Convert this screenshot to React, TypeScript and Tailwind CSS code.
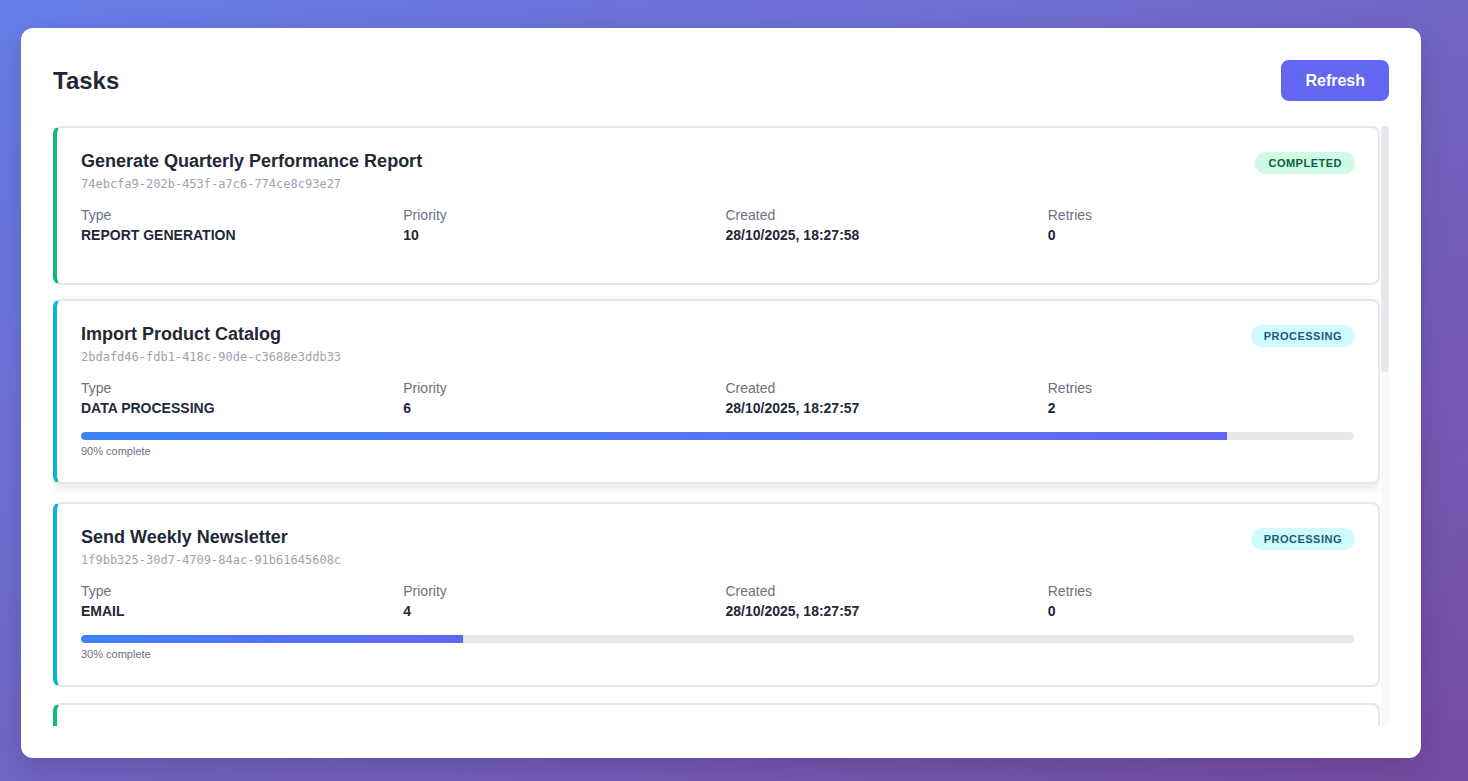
import React from "react";

type Task = {
  title: string;
  id: string;
  type: string;
  priority: number;
  created: string;
  retries: number;
  status: "completed" | "processing" | "pending" | "failed";
  progress?: number;
};

const tasks: Task[] = [
  { title: "Generate Quarterly Performance Report", id: "74ebcfa9-202b-453f-a7c6-774ce8c93e27", type: "REPORT GENERATION", priority: 10, created: "28/10/2025, 18:27:58", retries: 0, status: "completed" },
  { title: "Import Product Catalog", id: "2bdafd46-fdb1-418c-90de-c3688e3ddb33", type: "DATA PROCESSING", priority: 6, created: "28/10/2025, 18:27:57", retries: 2, status: "processing", progress: 90 },
  { title: "Send Weekly Newsletter", id: "1f9bb325-30d7-4709-84ac-91b61645608c", type: "EMAIL", priority: 4, created: "28/10/2025, 18:27:57", retries: 0, status: "processing", progress: 30 },
  { title: "Resize Uploaded Images", id: "c0a81e2f-5d34-4b7e-9f12-3a6e8d4b21f0", type: "IMAGE PROCESSING", priority: 5, created: "28/10/2025, 18:27:56", retries: 0, status: "completed" },
  { title: "Sync Customer Records", id: "8e4d2b71-93af-4c05-b6d8-0f17a2c9e453", type: "DATA PROCESSING", priority: 7, created: "28/10/2025, 18:27:55", retries: 1, status: "processing", progress: 55 },
  { title: "Backup Database", id: "5a7f19c3-e2b8-4d61-8a0c-b94e3f2d7c16", type: "MAINTENANCE", priority: 9, created: "28/10/2025, 18:27:54", retries: 0, status: "pending" },
];

const borderColor: Record<Task["status"], string> = {
  completed: "border-l-[#10b981]",
  processing: "border-l-[#06b6d4]",
  pending: "border-l-[#f59e0b]",
  failed: "border-l-[#ef4444]",
};

const badgeStyle: Record<Task["status"], string> = {
  completed: "bg-[#d1fae5] text-[#065f46]",
  processing: "bg-[#cffafe] text-[#155e75]",
  pending: "bg-[#fef3c7] text-[#92400e]",
  failed: "bg-[#fee2e2] text-[#991b1b]",
};

function TaskCard({ task, hovered }: { task: Task; hovered?: boolean }) {
  return (
    <div
      className={`shrink-0 bg-white border-2 border-[#e5e7eb] border-l-4 ${borderColor[task.status]} rounded-lg px-6 pt-[22px] pb-6 ${
        hovered ? "-translate-y-0.5 shadow-[0_4px_12px_rgba(0,0,0,0.1)]" : ""
      }`}
    >
      <div className="flex items-start justify-between">
        <div>
          <div className="text-[18px] leading-[22px] font-semibold text-[#1f2937]">{task.title}</div>
          <div className="mt-1 text-[12px] leading-4 text-[#9ca3af]" style={{ fontFamily: '"DejaVu Sans Mono", monospace' }}>
            {task.id}
          </div>
        </div>
        <span
          className={`mt-0.5 -mr-px rounded-full px-[13px] py-1 text-[11px] leading-[14px] font-bold uppercase tracking-[0.5px] ${badgeStyle[task.status]}`}
        >
          {task.status}
        </span>
      </div>
      <div className="mt-[13px] mb-[14px] grid grid-cols-4 gap-4 text-[14px] leading-5">
        <div>
          <div className="text-[#6b7280]">Type</div>
          <div className="font-bold text-[#1f2937]">{task.type}</div>
        </div>
        <div>
          <div className="text-[#6b7280]">Priority</div>
          <div className="font-bold text-[#1f2937]">{task.priority}</div>
        </div>
        <div>
          <div className="text-[#6b7280]">Created</div>
          <div className="font-bold text-[#1f2937]">{task.created}</div>
        </div>
        <div>
          <div className="text-[#6b7280]">Retries</div>
          <div className="font-bold text-[#1f2937]">{task.retries}</div>
        </div>
      </div>
      {task.status === "processing" && task.progress !== undefined && (
        <div>
          <div className="h-2 w-full rounded-full bg-[#e5e7eb] overflow-hidden">
            <div
              className="h-full rounded-l-full bg-gradient-to-r from-[#3b82f6] to-[#6366f1]"
              style={{ width: `${task.progress}%` }}
            />
          </div>
          <div className="mt-1 text-[11px] leading-[14px] text-[#6b7280]">{task.progress}% complete</div>
        </div>
      )}
    </div>
  );
}

export default function App() {
  return (
    <div
      className="min-h-screen w-full bg-gradient-to-br from-[#667eea] to-[#764ba2] pt-[28px] pl-[21px] pb-6"
      style={{ fontFamily: '"Liberation Sans", Arial, sans-serif' }}
    >
      <div className="w-[1400px] rounded-xl bg-white p-8 shadow-[0_10px_30px_rgba(0,0,0,0.15)]">
        <div className="mb-[25px] flex h-[41px] items-center justify-between">
          <h1 className="text-[24px] font-bold text-[#1f2937]">Tasks</h1>
          <button className="h-[41px] rounded-lg bg-[#6366f1] px-6 text-[16px] font-bold text-white">Refresh</button>
        </div>
        <div className="flex h-[600px] gap-px">
          <div className="flex min-w-0 flex-1 flex-col gap-4 overflow-hidden">
            {tasks.map((t, i) => (
              <TaskCard key={t.id} task={t} hovered={i === 1} />
            ))}
          </div>
          <div className="w-2 rounded-full bg-[#f8f9fb]">
            <div className="h-[246px] rounded-full bg-[#e5e7eb]" />
          </div>
        </div>
      </div>
    </div>
  );
}
